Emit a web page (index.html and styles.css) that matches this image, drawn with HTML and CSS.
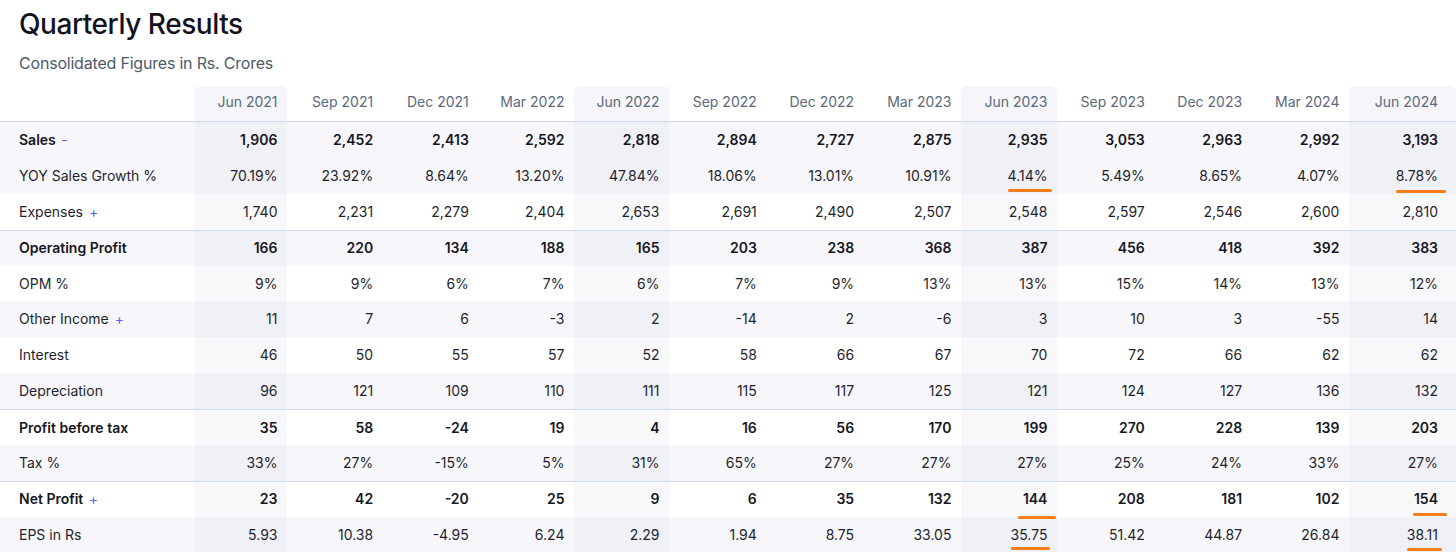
FILE: index.html
```html
<!DOCTYPE html>
<html lang="en">
<head>
<meta charset="utf-8">
<title>Quarterly Results</title>
<link rel="stylesheet" href="styles.css">
</head>
<body>
<section class="results">
  <header class="results-head">
    <h2 class="title">Quarterly Results</h2>
    <p class="subtitle">Consolidated Figures in Rs. Crores</p>
  </header>
  <table class="data-table">
    <colgroup>
      <col class="c-label">
      <col class="c-first">
      <col class="c-a"><col class="c-a"><col class="c-a">
      <col class="c-b">
      <col class="c-c"><col class="c-c"><col class="c-c">
      <col class="c-d">
      <col class="c-c"><col class="c-c"><col class="c-c">
      <col class="c-last">
    </colgroup>
    <thead>
      <tr>
        <th class="label"></th>
        <th>Jun 2021</th><th>Sep 2021</th><th>Dec 2021</th><th>Mar 2022</th>
        <th>Jun 2022</th><th>Sep 2022</th><th>Dec 2022</th><th>Mar 2023</th>
        <th>Jun 2023</th><th>Sep 2023</th><th>Dec 2023</th><th>Mar 2024</th>
        <th>Jun 2024</th>
      </tr>
    </thead>
    <tbody>
      <tr class="strong shade">
        <td class="label">Sales <span class="toggle">-</span></td>
        <td>1,906</td><td>2,452</td><td>2,413</td><td>2,592</td><td>2,818</td><td>2,894</td><td>2,727</td><td>2,875</td><td>2,935</td><td>3,053</td><td>2,963</td><td>2,992</td><td>3,193</td>
      </tr>
      <tr class="shade">
        <td class="label">YOY Sales Growth %</td>
        <td>70.19%</td><td>23.92%</td><td>8.64%</td><td>13.20%</td><td>47.84%</td><td>18.06%</td><td>13.01%</td><td>10.91%</td><td><span class="mark m1">4.14%</span></td><td>5.49%</td><td>8.65%</td><td>4.07%</td><td><span class="mark m2">8.78%</span></td>
      </tr>
      <tr>
        <td class="label">Expenses <span class="toggle">+</span></td>
        <td>1,740</td><td>2,231</td><td>2,279</td><td>2,404</td><td>2,653</td><td>2,691</td><td>2,490</td><td>2,507</td><td>2,548</td><td>2,597</td><td>2,546</td><td>2,600</td><td>2,810</td>
      </tr>
      <tr class="strong ruled shade">
        <td class="label">Operating Profit</td>
        <td>166</td><td>220</td><td>134</td><td>188</td><td>165</td><td>203</td><td>238</td><td>368</td><td>387</td><td>456</td><td>418</td><td>392</td><td>383</td>
      </tr>
      <tr>
        <td class="label">OPM %</td>
        <td>9%</td><td>9%</td><td>6%</td><td>7%</td><td>6%</td><td>7%</td><td>9%</td><td>13%</td><td>13%</td><td>15%</td><td>14%</td><td>13%</td><td>12%</td>
      </tr>
      <tr class="shade">
        <td class="label">Other Income <span class="toggle">+</span></td>
        <td>11</td><td>7</td><td>6</td><td>-3</td><td>2</td><td>-14</td><td>2</td><td>-6</td><td>3</td><td>10</td><td>3</td><td>-55</td><td>14</td>
      </tr>
      <tr>
        <td class="label">Interest</td>
        <td>46</td><td>50</td><td>55</td><td>57</td><td>52</td><td>58</td><td>66</td><td>67</td><td>70</td><td>72</td><td>66</td><td>62</td><td>62</td>
      </tr>
      <tr class="shade">
        <td class="label">Depreciation</td>
        <td>96</td><td>121</td><td>109</td><td>110</td><td>111</td><td>115</td><td>117</td><td>125</td><td>121</td><td>124</td><td>127</td><td>136</td><td>132</td>
      </tr>
      <tr class="strong ruled">
        <td class="label">Profit before tax</td>
        <td>35</td><td>58</td><td>-24</td><td>19</td><td>4</td><td>16</td><td>56</td><td>170</td><td>199</td><td>270</td><td>228</td><td>139</td><td>203</td>
      </tr>
      <tr class="shade">
        <td class="label">Tax %</td>
        <td>33%</td><td>27%</td><td>-15%</td><td>5%</td><td>31%</td><td>65%</td><td>27%</td><td>27%</td><td>27%</td><td>25%</td><td>24%</td><td>33%</td><td>27%</td>
      </tr>
      <tr class="strong ruled">
        <td class="label">Net Profit <span class="toggle">+</span></td>
        <td>23</td><td>42</td><td>-20</td><td>25</td><td>9</td><td>6</td><td>35</td><td>132</td><td><span class="mark m3">144</span></td><td>208</td><td>181</td><td>102</td><td><span class="mark m4">154</span></td>
      </tr>
      <tr class="shade">
        <td class="label">EPS in Rs</td>
        <td>5.93</td><td>10.38</td><td>-4.95</td><td>6.24</td><td>2.29</td><td>1.94</td><td>8.75</td><td>33.05</td><td><span class="mark m5">35.75</span></td><td>51.42</td><td>44.87</td><td>26.84</td><td><span class="mark m6">38.11</span></td>
      </tr>
    </tbody>
  </table>
</section>
</body>
</html>
```

FILE: styles.css
```css
* { box-sizing: border-box; }

html, body {
  margin: 0;
  padding: 0;
  background: #ffffff;
}

body {
  font-family: Inter, "Noto Sans", "Liberation Sans", sans-serif;
  color: #1f1f2d;
  overflow: hidden;
}

.results-head {
  padding: 6px 19px 0;
}

.title {
  margin: 0;
  font-size: 28px;
  line-height: 36px;
  font-weight: 500;
  color: #13131f;
  letter-spacing: -0.45px;
}

.subtitle {
  margin: 9px 0 0;
  font-size: 16px;
  line-height: 24px;
  color: #4c5a6b;
  letter-spacing: -0.2px;
}

.data-table {
  margin-top: 11px;
  width: 1456px;
  table-layout: fixed;
  border-collapse: separate;
  border-spacing: 0;
  font-size: 14px;
}

.c-label { width: 195px; }
.c-first { width: 92px; }
.c-a { width: 95.67px; }
.c-b { width: 95px; }
.c-c { width: 97.33px; }
.c-d { width: 96px; }
.c-last { width: 107px; }

.data-table th,
.data-table td {
  padding: 0 9.5px 0 0;
  text-align: right;
  white-space: nowrap;
  line-height: 20px;
}

.data-table th:last-child,
.data-table td:last-child {
  padding-right: 18px;
}

.data-table th {
  height: 36px;
  padding-bottom: 4px;
  font-weight: 400;
  color: #5b6a7b;
  border-bottom: 1px solid #cdd9ec;
  vertical-align: middle;
}

.data-table th:nth-child(4n+2) {
  background: #f5f5fa;
  border-radius: 6px 6px 0 0;
}

.data-table td {
  height: 35.9px;
  vertical-align: middle;
}

.data-table .label {
  text-align: left;
  padding-left: 19px;
}

.data-table tr.shade {
  background: #f7f7fb;
}

.data-table td:nth-child(4n+2) {
  background: rgba(70, 70, 150, 0.04);
}

.data-table tr.strong td {
  font-weight: 600;
  color: #16161f;
}

.data-table tr.ruled td {
  border-top: 1px solid #cdd9ec;
}

.toggle {
  color: #5c5ff2;
  font-weight: 400;
  margin-left: 2px;
}

.mark {
  position: relative;
  display: inline-block;
}

.mark::after {
  content: "";
  position: absolute;
  height: 3px;
  border-radius: 2px;
  background: #f77d17;
}

.m1::after { left: 0; right: -5px; top: calc(100% + 3px); }
.m2::after { left: 0; right: -8px; top: calc(100% + 4px); }
.m3::after { left: -5px; right: -9px; top: calc(100% + 7px); }
.m4::after { left: -1px; right: -9px; top: calc(100% + 4px); }
.m5::after { left: 0; right: -3px; top: calc(100% + 2px); }
.m6::after { left: 0; right: -4px; top: calc(100% + 3px); }
```
